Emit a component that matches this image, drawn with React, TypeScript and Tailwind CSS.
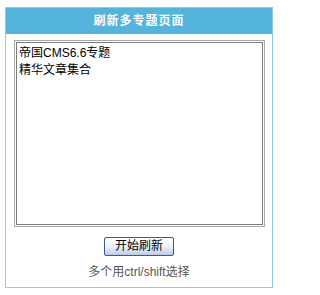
export default function App() {
  const topics = ["帝国CMS6.6专题", "精华文章集合"];

  return (
    <div
      className="min-h-[295px] w-[279px] bg-white pl-[5px] pt-[7px]"
      style={{ fontFamily: '"Liberation Sans", "Noto Sans CJK SC", sans-serif' }}
    >
      <div className="flex h-[281px] w-[268px] flex-col border border-[#8ccce6] bg-white">
        {/* Title bar */}
        <div className="flex h-[26px] items-center justify-center bg-[#55b4dc] text-[12px] font-bold tracking-[1px] text-white">
          刷新多专题页面
        </div>

        {/* Topic list */}
        <div className="mt-[6px] pl-[8px]">
          <div className="h-[187px] w-[251px] border border-[#a8a8a8] p-px">
            <div className="h-full w-full border border-[#7a7a7a] bg-white px-[2px] pt-[2px] text-[12px] leading-[17px] text-black">
              {topics.map((t) => (
                <div key={t}>{t}</div>
              ))}
            </div>
          </div>
        </div>

        {/* Actions */}
        <div className="mt-[10px] flex flex-col items-center">
          <button className="h-[19px] w-[70px] rounded-[2px] border border-[#3a5894] bg-gradient-to-b from-white via-[#eef2fa] to-[#bccbe6] text-[12px] leading-[17px] text-black">
            开始刷新
          </button>
          <div className="mt-[8px] text-[12px] leading-[16px] text-[#555]">
            多个用ctrl/shift选择
          </div>
        </div>
      </div>
    </div>
  );
}
